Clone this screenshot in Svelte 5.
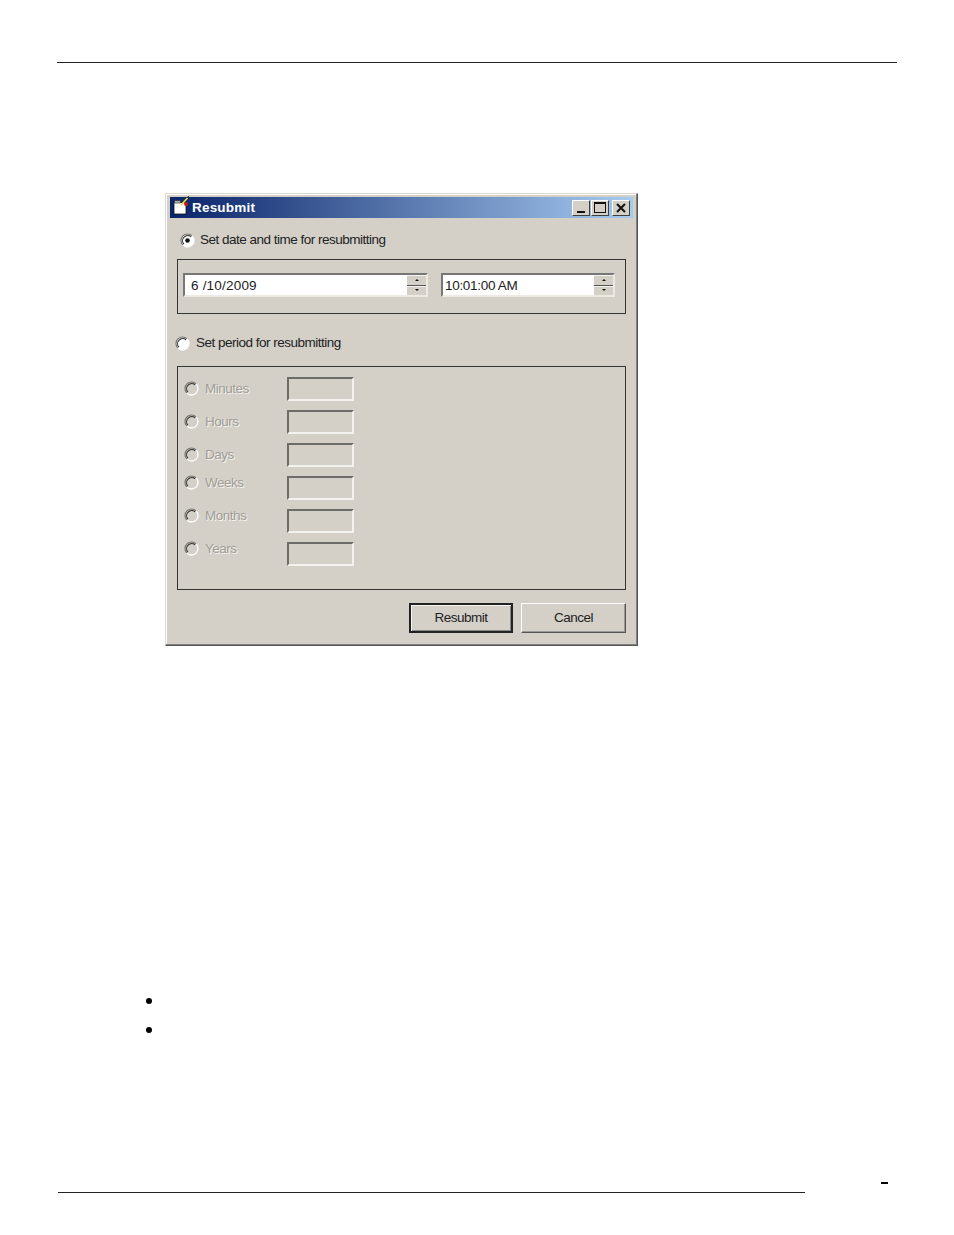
<script>
  const periods = [
    { label: 'Minutes', raised: false },
    { label: 'Hours', raised: false },
    { label: 'Days', raised: false },
    { label: 'Weeks', raised: true },
    { label: 'Months', raised: true },
    { label: 'Years', raised: true }
  ];
</script>

{#snippet radio(disabled, checked)}
  <svg class="radio" width="15" height="15" viewBox="0 0 15 15">
    <circle cx="7.5" cy="7.5" r="6.5" fill={disabled ? '#d4d0c8' : '#fff'} />
    <path d="M2.9 12.1A6.5 6.5 0 0 1 12.1 2.9" fill="none" stroke="#77756f" stroke-width="1.2" />
    <path d="M3.9 11.1A5.1 5.1 0 0 1 11.1 3.9" fill="none" stroke="#333" stroke-width="1.1" />
    <path d="M12.1 2.9A6.5 6.5 0 0 1 2.9 12.1" fill="none" stroke="#fff" stroke-width="1.3" />
    {#if checked}
      <circle cx="7.5" cy="7.5" r="2.3" fill="#111" />
    {/if}
  </svg>
{/snippet}

{#snippet spinner()}
  <div class="spin">
    <div class="spin-btn"><span class="arrow up"></span></div>
    <div class="spin-btn"><span class="arrow down"></span></div>
  </div>
{/snippet}

<div class="page">
  <div class="top-rule"></div>

  <div class="dialog">
    <div class="titlebar">
      <svg class="app-icon" width="18" height="20" viewBox="0 0 18 20">
        <path d="M1 6.5h12V18H1z" fill="#fff" stroke="#111" stroke-width="0.8" />
        <path d="M1.5 4.5h6v2.5h-6z" fill="#b4b4b4" stroke="#222" stroke-width="0.6" />
        <path d="M8 9l6.5-7" stroke="#e8dc3c" stroke-width="1.8" />
        <path d="M14 1.5l2-1" stroke="#222" stroke-width="1" />
        <circle cx="13" cy="8" r="2" fill="#d01818" />
      </svg>
      <span class="title">Resubmit</span>
      <div class="win-buttons">
        <button class="win-btn" aria-label="Minimize">
          <span class="min-glyph"></span>
        </button>
        <button class="win-btn" aria-label="Maximize">
          <span class="max-glyph"></span>
        </button>
        <button class="win-btn close" aria-label="Close">
          <svg width="12" height="10" viewBox="0 0 12 10">
            <path d="M2 1l8 8M10 1l-8 8" stroke="#111" stroke-width="2" />
          </svg>
        </button>
      </div>
    </div>

    <div class="body">
      <label class="choice first">
        {@render radio(false, true)}
        <span>Set date and time for resubmitting</span>
      </label>

      <div class="group date-group">
        <div class="field date-field">
          <div class="field-text date-text">6 /10/2009</div>
          {@render spinner()}
        </div>
        <div class="field time-field">
          <div class="field-text">10:01:00 AM</div>
          {@render spinner()}
        </div>
      </div>

      <label class="choice second">
        {@render radio(false, false)}
        <span>Set period for resubmitting</span>
      </label>

      <div class="group period-group">
        {#each periods as p}
          <div class="period-row">
            <div class="period-choice" class:raised={p.raised}>
              {@render radio(true, false)}
              <span class="disabled-text">{p.label}</span>
            </div>
            <div class="sunken"></div>
          </div>
        {/each}
      </div>

      <div class="actions">
        <button class="btn default">Resubmit</button>
        <button class="btn">Cancel</button>
      </div>
    </div>
  </div>

  <ul class="bullets">
    <li></li>
    <li></li>
  </ul>

  <div class="footer">
    <div class="bottom-rule"></div>
    <div class="dash"></div>
  </div>
</div>

<style>
  :global(body) {
    margin: 0;
    background: #fff;
  }

  .page {
    width: 954px;
    height: 1235px;
    padding-top: 62px;
    box-sizing: border-box;
    font-family: "Liberation Sans", Arial, sans-serif;
    overflow: hidden;
  }

  .top-rule {
    height: 1px;
    margin: 0 57px;
    background: #222;
  }

  .dialog {
    box-sizing: border-box;
    width: 473px;
    height: 453px;
    margin: 130px 0 0 165px;
    padding: 3px 4px 0 4px;
    background: #d4d0c8;
    border: 1px solid;
    border-color: #dbd8d1 #555 #555 #dbd8d1;
    box-shadow: inset -1px -1px 0 #808080, inset 1px 1px 0 #fff;
    display: flex;
    flex-direction: column;
    color: #222;
    font-size: 13.5px;
  }

  .titlebar {
    flex: none;
    height: 21px;
    display: flex;
    align-items: center;
    padding-left: 3px;
    background: linear-gradient(90deg, #0a246a, #a6caf0);
  }

  .app-icon {
    flex: none;
    margin-top: -3px;
  }

  .title {
    margin-left: 1px;
    color: #fff;
    font-weight: bold;
    font-size: 13.5px;
    letter-spacing: 0.2px;
  }

  .win-buttons {
    margin-left: auto;
    margin-right: 3px;
    display: flex;
  }

  .win-btn {
    box-sizing: border-box;
    width: 18px;
    height: 16px;
    padding: 0;
    border: 1px solid;
    border-color: #fff #404040 #404040 #fff;
    background: #d4d0c8;
    display: flex;
    align-items: center;
    justify-content: center;
  }

  .win-btn:first-child {
    margin-right: 1px;
  }

  .win-btn.close {
    margin-left: 3px;
  }

  .min-glyph {
    width: 8px;
    height: 2px;
    margin-top: 8px;
    background: #111;
  }

  .max-glyph {
    box-sizing: border-box;
    width: 12px;
    height: 11px;
    border: 1px solid #111;
    border-top-width: 2px;
  }

  .body {
    flex: 1;
    display: flex;
    flex-direction: column;
    padding: 0 7px;
  }

  .choice {
    display: flex;
    align-items: center;
    height: 16px;
  }

  .choice span {
    margin-left: 5px;
    padding-bottom: 2px;
    letter-spacing: -0.5px;
  }

  .choice.first {
    margin: 14px 0 0 3px;
  }

  .choice.second {
    margin: 21px 0 0 -2px;
  }

  .choice.second span {
    margin-left: 6px;
  }

  .radio {
    flex: none;
  }

  .group {
    box-sizing: border-box;
    width: 449px;
    border: 1px solid #333;
  }

  .date-group {
    height: 55px;
    margin-top: 11px;
    padding: 13px 10px 0 5px;
    display: flex;
    justify-content: space-between;
  }

  .field {
    box-sizing: border-box;
    height: 24px;
    display: flex;
    background: #fff;
    border: 2px solid;
    border-color: #777 #eeeae3 #eeeae3 #777;
  }

  .date-field {
    width: 245px;
  }

  .time-field {
    width: 174px;
  }

  .field-text {
    flex: 1;
    padding: 1px 0 0 2px;
    line-height: 20px;
    letter-spacing: -0.3px;
    color: #222;
  }

  .date-text {
    padding-left: 6px;
    letter-spacing: 0.2px;
  }

  .spin {
    flex: none;
    width: 19px;
    display: flex;
    flex-direction: column;
    background: #555;
    gap: 1px;
  }

  .spin-btn {
    flex: 1;
    background: #d4d0c8;
    box-shadow: inset 0 1px 0 #f4f2ee;
    display: flex;
    align-items: center;
    justify-content: center;
  }

  .arrow {
    width: 0;
    height: 0;
    border-left: 2px solid transparent;
    border-right: 2px solid transparent;
  }

  .arrow.up {
    border-bottom: 2px solid #111;
  }

  .arrow.down {
    border-top: 2px solid #111;
  }

  .period-group {
    height: 224px;
    margin-top: 15px;
    padding-top: 10px;
  }

  .period-row {
    height: 33px;
    display: flex;
    align-items: flex-start;
    padding-left: 6px;
  }

  .period-choice {
    width: 103px;
    height: 23px;
    display: flex;
    align-items: center;
  }

  .period-choice.raised {
    margin-top: -5px;
  }

  .disabled-text {
    margin-left: 6px;
    color: #a09d96;
    text-shadow: 1px 1px 0 #f4f2ee;
    letter-spacing: -0.5px;
  }

  .sunken {
    box-sizing: border-box;
    width: 67px;
    height: 24px;
    border: 2px solid;
    border-color: #6e6c68 #f4f2ee #f4f2ee #6e6c68;
  }

  .actions {
    display: flex;
    justify-content: flex-end;
    gap: 8px;
    margin-top: 13px;
  }

  .btn {
    box-sizing: border-box;
    width: 105px;
    height: 30px;
    padding: 0 0 1px;
    font: inherit;
    letter-spacing: -0.5px;
    color: #222;
    background: #d4d0c8;
    border: 1px solid;
    border-color: #fff #555 #555 #fff;
    box-shadow: inset -1px -1px 0 #999;
  }

  .btn.default {
    width: 104px;
    border: 2px solid #222;
    box-shadow: inset 1px 1px 0 #f6f5f2, inset -1px -1px 0 #888;
  }

  .bullets {
    list-style: none;
    margin: 340px 0 0 146px;
    padding: 0;
  }

  .bullets li {
    height: 29px;
    display: flex;
    align-items: center;
  }

  .bullets li::before {
    content: "";
    width: 6px;
    height: 6px;
    border-radius: 50%;
    background: #000;
  }

  .footer {
    margin: 137px 0 0 58px;
    display: flex;
    align-items: flex-start;
    height: 12px;
  }

  .bottom-rule {
    width: 747px;
    height: 1px;
    margin-top: 11px;
    background: #222;
  }

  .dash {
    width: 7px;
    height: 2px;
    margin: 1px 0 0 76px;
    background: #000;
  }
</style>
